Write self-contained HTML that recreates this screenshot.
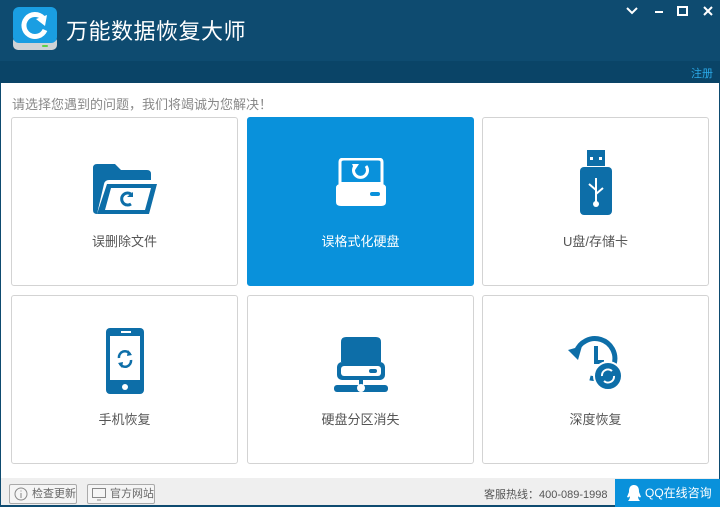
<!DOCTYPE html>
<html><head><meta charset="utf-8"><style>
*{margin:0;padding:0;box-sizing:border-box}
body{width:720px;height:507px;overflow:hidden;font-family:"Liberation Sans","Noto Sans CJK SC",sans-serif;background:#fff;position:relative}
.top{position:absolute;left:0;top:0;width:720px;height:61px;background:#0e4b70}
.sub{position:absolute;left:0;top:61px;width:720px;height:22px;background:#0a4467}
.title{position:absolute;left:66px;top:14px;color:#fff;font-size:22px;letter-spacing:0.5px}
.reg{position:absolute;right:7px;top:65px;color:#2aa9e8;font-size:11px}
.hint{position:absolute;left:12px;top:94px;color:#888;font-size:13px}
.card{position:absolute;width:227px;height:169px;border:1px solid #d3d3d3;border-radius:3px;background:#fff;text-align:center}
.card span{position:absolute;left:0;right:0;top:113px;font-size:13px;color:#555}
.card svg{position:absolute;left:50%;transform:translateX(-50%)}
.sel{background:#0991db;border-color:#0991db}
.sel span{color:#fff}
.foot{position:absolute;left:0;top:478px;width:720px;height:29px;background:#efefef;border-left:1px solid #0e4b70;border-right:1px solid #0e4b70;border-bottom:2px solid #0e4b70}
.btn{position:absolute;top:484px;height:20px;border:1px solid #aaa;border-radius:2px;background:#f5f5f5;font-size:11px;color:#666;line-height:18px;padding-left:22px}
.qq{position:absolute;left:615px;top:479px;width:105px;height:28px;background:#0991db;color:#fff;font-size:12px;line-height:28px;padding-left:30px}
.edge{position:absolute;top:83px;width:1px;height:400px;background:#0e4b70}
</style></head><body>
<div class="top"></div><div class="sub"></div>
<div class="edge" style="left:0"></div><div class="edge" style="right:0"></div>
<svg style="position:absolute;left:12px;top:6px" width="46" height="46" viewBox="0 0 46 46">
<rect x="1" y="30" width="44" height="14" rx="5" fill="#cfd3d6"/>
<rect x="1" y="1" width="44" height="36" rx="6" fill="#1a9ee2"/>
<circle cx="34" cy="42" r="0"/><rect x="30" y="39" width="6" height="2" rx="1" fill="#5ed04a"/>
<path d="M31 12 A11 11 0 1 0 33 24" fill="none" stroke="#fff" stroke-width="5"/>
<path d="M24 13 L35 9 L33 20 Z" fill="#fff"/>
</svg>
<div class="title">万能数据恢复大师</div>
<svg style="position:absolute;left:624px;top:5px" width="92" height="12" viewBox="0 0 92 12" stroke="#fff" stroke-width="2" fill="none">
<path d="M3 3 L8 8 L13 3"/><path d="M31 7 H39"/><rect x="54" y="2" width="9" height="8"/><path d="M80 2 L88 10 M88 2 L80 10"/>
</svg>
<div class="reg">注册</div>
<div class="hint">请选择您遇到的问题，我们将竭诚为您解决！</div>

<div class="card" style="left:11px;top:117px">
<svg style="top:44px" width="68" height="56" viewBox="0 0 68 56"><path d="M2 6 Q2 2 6 2 H24 L30 8 H56 Q60 8 60 12 V18 H18 Q14 18 13 22 L6 52 H6 Q2 52 2 48Z" fill="#0d6ea8"/><path d="M16 22 H66 L58 52 H6 Z" fill="#0d6ea8"/><path d="M20 26 H60 L54 48 H14 Z" fill="#fff"/><path d="M40 32 A6 6 0 1 0 40 42" fill="none" stroke="#0d6ea8" stroke-width="3"/><path d="M36 35 L42 35 L42 30Z" fill="#0d6ea8"/></svg>
<span>误删除文件</span></div>
<div class="card sel" style="left:247px;top:117px">
<svg style="top:40px" width="52" height="50" viewBox="0 0 52 50"><path d="M5 4 Q5 1 9 1 H43 Q47 1 47 4 V26 H5Z" fill="none" stroke="#fff" stroke-width="3"/><path d="M1 30 Q1 26 6 26 H46 Q51 26 51 30 V44 Q51 48 46 48 H6 Q1 48 1 44Z" fill="#fff"/><rect x="5" y="24" width="42" height="6" fill="#fff"/><rect x="35" y="34" width="10" height="4" rx="2" fill="#0991db"/><path d="M20 8 A7 7 0 1 0 31 8" fill="none" stroke="#fff" stroke-width="3"/><path d="M17 6 L24 6 L20 12Z" fill="#fff"/></svg>
<span>误格式化硬盘</span></div>
<div class="card" style="left:482px;top:117px">
<svg style="top:32px" width="34" height="66" viewBox="0 0 34 66"><rect x="8" y="0" width="18" height="16" fill="#0d6ea8"/><rect x="11" y="7" width="3" height="3" fill="#fff"/><rect x="20" y="7" width="3" height="3" fill="#fff"/><rect x="1" y="17" width="32" height="48" rx="4" fill="#0d6ea8"/><path d="M17 28 V54 M17 40 L10 34 M17 44 L24 38" stroke="#fff" stroke-width="2" fill="none"/><circle cx="17" cy="54" r="3" fill="#fff"/></svg>
<span>U盘/存储卡</span></div>

<div class="card" style="left:11px;top:295px">
<svg style="top:32px" width="40" height="66" viewBox="0 0 40 66"><rect x="1" y="0" width="38" height="66" rx="4" fill="#0d6ea8"/><rect x="5" y="8" width="30" height="44" fill="#fff"/><circle cx="20" cy="59" r="3" fill="#fff"/><rect x="16" y="3" width="10" height="2" fill="#fff"/><path d="M14 30 A6 6 0 0 1 25 26 M26 32 A6 6 0 0 1 15 36" fill="none" stroke="#0d6ea8" stroke-width="2.5"/><path d="M23 22 L27 27 L22 28Z M17 40 L13 35 L18 34Z" fill="#0d6ea8"/></svg>
<span>手机恢复</span></div>
<div class="card" style="left:247px;top:295px">
<svg style="top:40px" width="56" height="58" viewBox="0 0 56 58"><path d="M8 6 Q8 1 13 1 H43 Q48 1 48 6 V26 H8Z" fill="#0d6ea8"/><rect x="4" y="26" width="48" height="18" rx="5" fill="#0d6ea8"/><rect x="8" y="30" width="40" height="10" rx="3" fill="#fff"/><rect x="36" y="33" width="8" height="4" rx="2" fill="#0d6ea8"/><rect x="26" y="44" width="4" height="7" fill="#0d6ea8"/><rect x="1" y="49" width="54" height="7" rx="3" fill="#0d6ea8"/><circle cx="28" cy="52" r="4" fill="#fff"/></svg>
<span>硬盘分区消失</span></div>
<div class="card" style="left:482px;top:295px">
<svg style="top:40px" width="56" height="56" viewBox="0 0 56 56"><path d="M8 16 A20 20 0 1 1 22 42" fill="none" stroke="#0d6ea8" stroke-width="5"/><path d="M0 14 L14 10 L10 24Z" fill="#0d6ea8"/><path d="M28 10 V26 H36" fill="none" stroke="#0d6ea8" stroke-width="4"/><circle cx="40" cy="40" r="14" fill="#0d6ea8" stroke="#fff" stroke-width="2"/><path d="M34 40 A6 6 0 0 1 44 35 M46 40 A6 6 0 0 1 36 45" fill="none" stroke="#fff" stroke-width="2"/></svg>
<span>深度恢复</span></div>

<div class="foot"></div>
<div class="btn" style="left:9px;width:68px"><svg style="position:absolute;left:4px;top:2px" width="14" height="14"><circle cx="7" cy="7" r="6" fill="none" stroke="#888"/><path d="M7 6 V11 M7 3.5 V4.5" stroke="#888"/></svg>检查更新</div>
<div class="btn" style="left:87px;width:68px"><svg style="position:absolute;left:4px;top:3px" width="14" height="13"><rect x="0.5" y="0.5" width="13" height="9" fill="none" stroke="#888"/><path d="M5 12 H9" stroke="#888"/></svg>官方网站</div>
<div style="position:absolute;left:484px;top:486px;font-size:11px;color:#555">客服热线：400-089-1998</div>
<div class="qq"><svg style="position:absolute;left:11px;top:5px" width="16" height="18" viewBox="0 0 16 18"><path d="M8 1 C3 1 3 6 3 8 L1 13 Q3 14 4 12 Q4 15 2 17 H14 Q12 15 12 12 Q13 14 15 13 L13 8 C13 6 13 1 8 1Z" fill="#fff"/></svg>QQ在线咨询</div>
</body></html>
